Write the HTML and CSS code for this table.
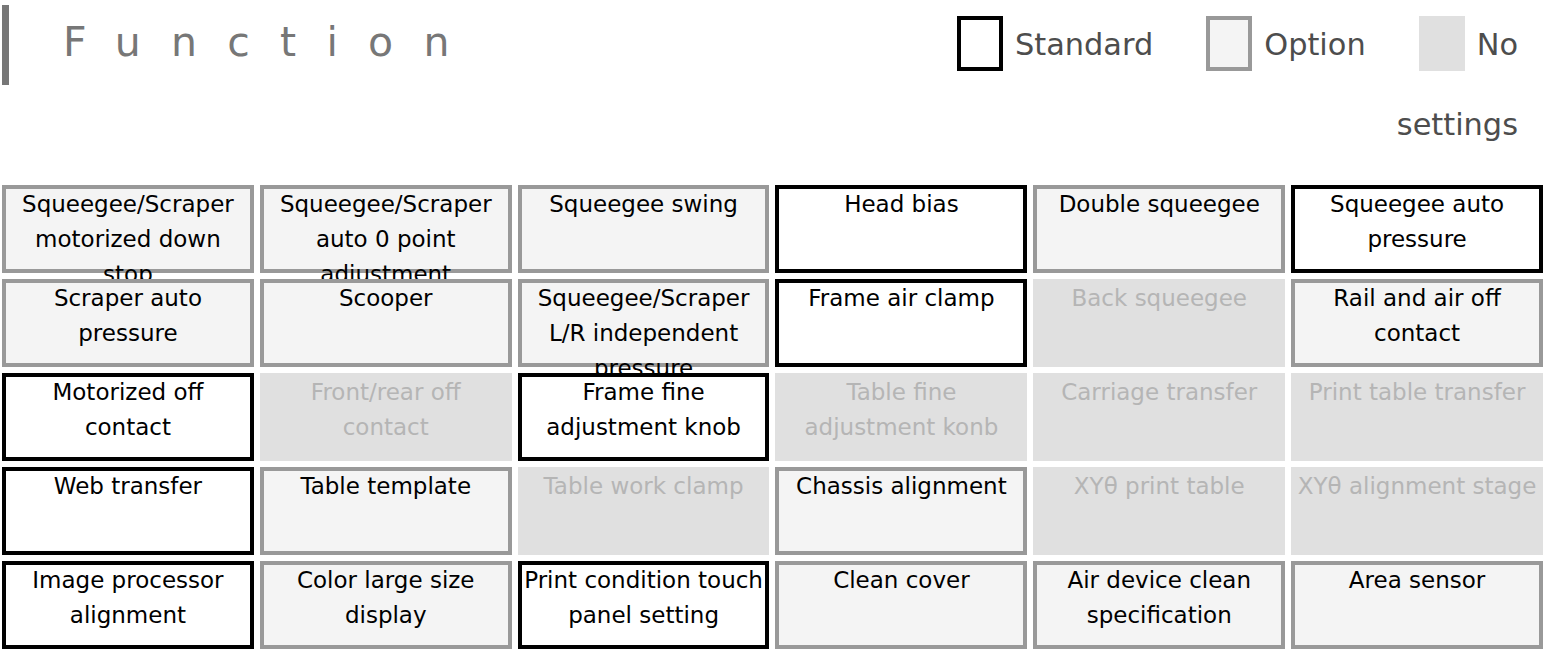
FILE: index.html
```html
<!DOCTYPE html>
<html lang="en">
<head>
<meta charset="utf-8">
<title>Function</title>
<link rel="stylesheet" href="styles.css">
</head>
<body>
<div class="page">
  <header class="head">
    <h1 class="title">Function</h1>
    <div class="legend"><span class="key"><i class="swatch swatch-std"></i>Standard</span><span class="key"><i class="swatch swatch-opt"></i>Option</span><span class="key"><i class="swatch swatch-no"></i>No settings</span></div>
  </header>
  <div class="grid">
    <div class="cell opt"><span class="lbl">Squeegee/Scraper<br>motorized down<br>stop</span></div>
    <div class="cell opt"><span class="lbl">Squeegee/Scraper<br>auto 0 point<br>adjustment</span></div>
    <div class="cell opt"><span class="lbl">Squeegee swing</span></div>
    <div class="cell std"><span class="lbl">Head bias</span></div>
    <div class="cell opt"><span class="lbl">Double squeegee</span></div>
    <div class="cell std"><span class="lbl">Squeegee auto<br>pressure</span></div>

    <div class="cell opt"><span class="lbl">Scraper auto<br>pressure</span></div>
    <div class="cell opt"><span class="lbl">Scooper</span></div>
    <div class="cell opt"><span class="lbl">Squeegee/Scraper<br>L/R independent<br>pressure</span></div>
    <div class="cell std"><span class="lbl">Frame air clamp</span></div>
    <div class="cell no"><span class="lbl">Back squeegee</span></div>
    <div class="cell opt"><span class="lbl">Rail and air off<br>contact</span></div>

    <div class="cell std"><span class="lbl">Motorized off<br>contact</span></div>
    <div class="cell no"><span class="lbl">Front/rear off<br>contact</span></div>
    <div class="cell std"><span class="lbl">Frame fine<br>adjustment knob</span></div>
    <div class="cell no"><span class="lbl">Table fine<br>adjustment konb</span></div>
    <div class="cell no"><span class="lbl">Carriage transfer</span></div>
    <div class="cell no"><span class="lbl">Print table transfer</span></div>

    <div class="cell std"><span class="lbl">Web transfer</span></div>
    <div class="cell opt"><span class="lbl">Table template</span></div>
    <div class="cell no"><span class="lbl">Table work clamp</span></div>
    <div class="cell opt"><span class="lbl">Chassis alignment</span></div>
    <div class="cell no"><span class="lbl">XYθ print table</span></div>
    <div class="cell no"><span class="lbl">XYθ alignment stage</span></div>

    <div class="cell std"><span class="lbl">Image processor<br>alignment</span></div>
    <div class="cell opt"><span class="lbl">Color large size<br>display</span></div>
    <div class="cell std"><span class="lbl">Print condition touch<br>panel setting</span></div>
    <div class="cell opt"><span class="lbl">Clean cover</span></div>
    <div class="cell opt"><span class="lbl">Air device clean<br>specification</span></div>
    <div class="cell opt"><span class="lbl">Area sensor</span></div>
  </div>
</div>
</body>
</html>
```
FILE: styles.css
```css
html, body {
  margin: 0;
  padding: 0;
  background: #fff;
}

body {
  font-family: "DejaVu Sans", Verdana, sans-serif;
}

.page {
  padding: 5px 2px 0 2px;
}

.head {
  display: flex;
  justify-content: space-between;
  align-items: flex-start;
  height: 160px;
  margin-bottom: 20px;
}

.title {
  margin: 0;
  height: 80px;
  line-height: 74px;
  border-left: 7px solid #777;
  padding-left: 54px;
  font-size: 41px;
  font-weight: normal;
  letter-spacing: 30.3px;
  color: #777;
}

.legend {
  width: 640px;
  margin-right: 25px;
  text-align: right;
  line-height: 80px;
  font-size: 30.4px;
  color: #4d4d4d;
}

.key {
  margin-left: 53px;
}

.key:first-child {
  margin-left: 0;
}

.swatch {
  display: inline-block;
  box-sizing: border-box;
  width: 46px;
  height: 55px;
  margin-right: 12px;
  vertical-align: -16px;
}

.swatch-std {
  background: #fff;
  border: 4px solid #000;
}

.swatch-opt {
  background: #f4f4f4;
  border: 4px solid #999;
}

.swatch-no {
  background: #e0e0e0;
}

.grid {
  display: grid;
  grid-template-columns: repeat(6, 1fr);
  grid-auto-rows: 88px;
  gap: 6px;
}

.cell {
  box-sizing: border-box;
  border: 4px solid transparent;
  text-align: center;
  font-size: 23px;
  line-height: 35px;
  color: #000;
  white-space: nowrap;
}

.lbl {
  display: block;
  margin-top: -2px;
}

.cell.std {
  background: #fff;
  border-color: #000;
}

.cell.opt {
  background: #f4f4f4;
  border-color: #999;
}

.cell.no {
  background: #e0e0e0;
  border-color: #e0e0e0;
  color: #b5b5b5;
}
```
